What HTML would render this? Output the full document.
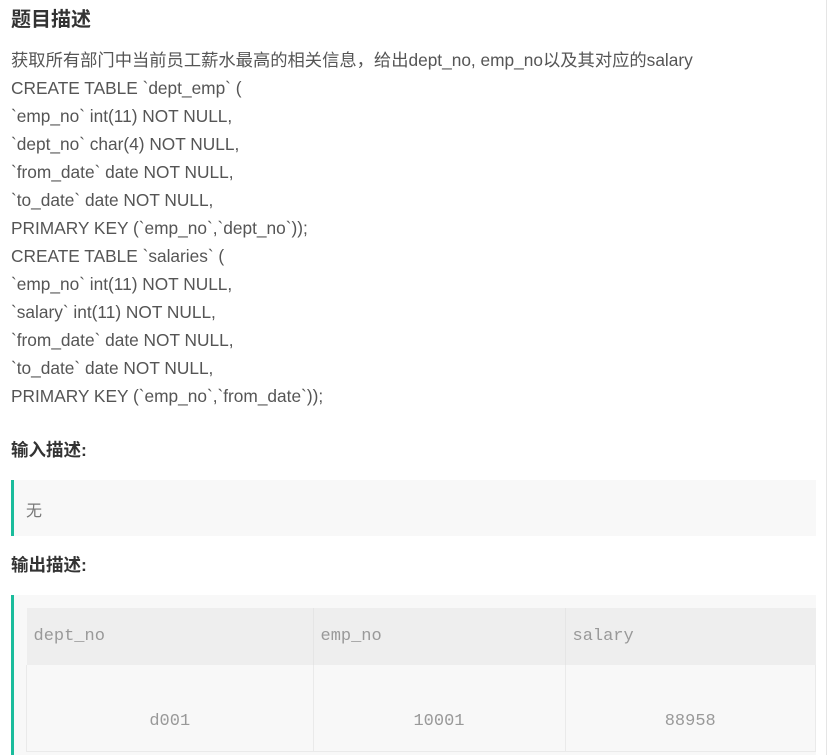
<!DOCTYPE html>
<html><head><meta charset="utf-8"><style>
body{margin:0;background:#fff;width:830px;height:755px;overflow:hidden;position:relative;font-family:"Liberation Sans","Noto Sans CJK SC",sans-serif;color:#555}
.edge{position:absolute;left:826px;top:0;width:1px;height:755px;background:#e5e5e5}
h2{position:absolute;left:11px;top:6px;margin:0;font-size:20px;font-weight:bold;color:#333;line-height:28px}
.txt{position:absolute;left:11px;top:46px;font-size:17.3px;color:#555;white-space:nowrap}
.txt div{height:28px;line-height:28px}
h3{position:absolute;left:11px;margin:0;font-size:17.5px;font-weight:bold;color:#333;line-height:22px}
.blk{position:absolute;left:11px;width:805px;background:#f8f8f8;border-left:3px solid #1abc9c;box-sizing:border-box;overflow:hidden}
.mono{font-family:"Liberation Mono","Noto Sans CJK SC",monospace;color:#777;font-size:16px}
table{position:absolute;left:12px;top:13px;border-collapse:collapse;width:790px;font-family:"Liberation Mono",monospace;font-size:17px;color:#999;table-layout:fixed}
th{background:#eee;height:57px;text-align:left;font-weight:normal;padding:0 0 0 7px;border-right:1px solid #e5e5e5}
td{height:86px;text-align:center;border:1px solid #eaeaea;border-top:none;padding-top:28px;box-sizing:border-box}
</style></head><body>
<div class="edge"></div>
<h2>题目描述</h2>
<div class="txt"><div>获取所有部门中当前员工薪水最高的相关信息，给出dept_no, emp_no以及其对应的salary</div><div>CREATE TABLE `dept_emp` (</div><div>`emp_no` int(11) NOT NULL,</div><div>`dept_no` char(4) NOT NULL,</div><div>`from_date` date NOT NULL,</div><div>`to_date` date NOT NULL,</div><div>PRIMARY KEY (`emp_no`,`dept_no`));</div><div>CREATE TABLE `salaries` (</div><div>`emp_no` int(11) NOT NULL,</div><div>`salary` int(11) NOT NULL,</div><div>`from_date` date NOT NULL,</div><div>`to_date` date NOT NULL,</div><div>PRIMARY KEY (`emp_no`,`from_date`));</div></div>
<h3 style="top:439px">输入描述:</h3>
<div class="blk" style="top:480px;height:56px"><span class="mono" style="position:absolute;left:12px;top:17px">无</span></div>
<h3 style="top:554px">输出描述:</h3>
<div class="blk" style="top:595px;height:160px">
<table><tr><th style="width:279px">dept_no</th><th style="width:244px">emp_no</th><th style="border-right:none">salary</th></tr>
<tr><td>d001</td><td>10001</td><td>88958</td></tr></table>
</div>
</body></html>
